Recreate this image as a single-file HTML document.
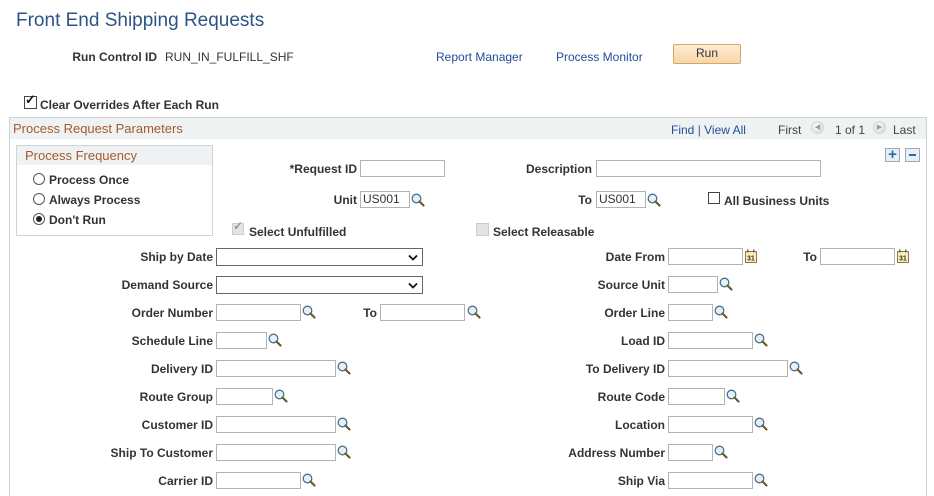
<!DOCTYPE html>
<html><head><meta charset="utf-8"><style>
html,body{margin:0;width:934px;height:496px;overflow:hidden}
body{background:#fff;font-family:"Liberation Sans",Arial,sans-serif;position:relative}
div,span{position:absolute}
.t{font-size:12px;color:#333;white-space:nowrap;line-height:14px}
.b{font-weight:bold}
.l{font-size:12px;color:#333;font-weight:bold;white-space:nowrap;line-height:14px;text-align:right}
.lk{font-size:12px;color:#1f4e99;white-space:nowrap;line-height:14px}
.i{border:1px solid #b3b3b3;background:#fff;height:17px;box-sizing:border-box;font-size:12px;color:#333;line-height:15px;padding-left:2px}
.s{border:1px solid #666;background:#fff;height:18px;box-sizing:border-box}
.m{width:14px;height:14px}
.cb{width:12px;height:12px;border:1px solid #444;background:#fff;box-sizing:border-box}
.rd{width:12px;height:12px;border:1px solid #555;border-radius:50%;background:#fff;box-sizing:border-box}
.cal{width:12px;height:14px}
</style></head><body>
<svg width="0" height="0" style="position:absolute"><defs>
<symbol id="mg" viewBox="0 0 14 14"><circle cx="5.5" cy="5.5" r="4.3" fill="#e4f1fb" stroke="#4a6f8a" stroke-width="1.3"/><path d="M8.5 8.5L12.5 12.5" stroke="#6b5a2a" stroke-width="2.2" stroke-linecap="round"/></symbol>
<symbol id="cl" viewBox="0 0 12 14"><rect x="0.5" y="2.5" width="11" height="11" fill="#fbeebb" stroke="#8a7a40"/><rect x="2" y="0.5" width="1.5" height="3" fill="#666"/><rect x="8" y="0.5" width="1.5" height="3" fill="#666"/><text x="2" y="11.5" font-size="7" font-family="Liberation Sans" font-weight="bold" fill="#333">31</text></symbol>
<symbol id="dd" viewBox="0 0 10 7"><path d="M1 1.5L5 5.5L9 1.5" fill="none" stroke="#111" stroke-width="1.8"/></symbol>
</defs></svg>

<div style="left:16px;top:10px;font-size:19px;color:#2e5485;white-space:nowrap">Front End Shipping Requests</div>
<div class="l" style="right:777px;top:50px">Run Control ID</div>
<div class="t" style="left:165px;top:50px">RUN_IN_FULFILL_SHF</div>
<div class="lk" style="left:436px;top:50px">Report Manager</div>
<div class="lk" style="left:556px;top:50px">Process Monitor</div>
<div style="left:673px;top:44px;width:68px;height:20px;box-sizing:border-box;border:1px solid #d8a66d;border-radius:2px;background:linear-gradient(#fdebd2,#f8d7a8);font-size:12px;color:#333;text-align:center;line-height:17px">Run</div>

<div class="cb" style="left:24px;top:96px;width:13px;height:13px"></div>
<div style="left:25px;top:92px;font-size:13px;font-weight:bold;color:#111">✓</div>
<div class="t b" style="left:40px;top:98px">Clear Overrides After Each Run</div>

<div style="left:9px;top:117px;width:918px;height:390px;border:1px solid #cfd3d5;box-sizing:border-box"></div>
<div style="left:10px;top:118px;width:916px;height:21px;background:#eff2f2"></div>
<div style="left:13px;top:121px;font-size:13px;color:#a65a2c;white-space:nowrap">Process Request Parameters</div>
<div class="lk" style="left:671px;top:123px">Find <span style="position:static;color:#555">|</span> View All</div>
<div class="t" style="left:778px;top:123px;color:#444">First</div>
<div style="left:811px;top:121px;width:13px;height:13px;border-radius:50%;background:radial-gradient(circle at 40% 40%,#fff,#cfcfcf);border:1px solid #d5d5d5;box-sizing:border-box;font-size:7px;color:#999;text-align:center;line-height:11px">◀</div>
<div class="t" style="left:835px;top:123px;color:#444">1 of 1</div>
<div style="left:873px;top:121px;width:13px;height:13px;border-radius:50%;background:radial-gradient(circle at 40% 40%,#fff,#cfcfcf);border:1px solid #d5d5d5;box-sizing:border-box;font-size:7px;color:#999;text-align:center;line-height:11px">▶</div>
<div class="t" style="left:893px;top:123px;color:#444">Last</div>
<div style="left:885px;top:148px;width:15px;height:14px;border:1px solid #9ab;background:#e8eef2;box-sizing:border-box;color:#2a6ab0;font-weight:bold;font-size:15px;line-height:11px;text-align:center">+</div>
<div style="left:905px;top:148px;width:15px;height:14px;border:1px solid #9ab;background:#e8eef2;box-sizing:border-box"><span style="left:3px;top:5px;width:7px;height:2px;background:#2a6ab0"></span></div>

<div style="left:16px;top:145px;width:197px;height:91px;border:1px solid #cfd3d5;box-sizing:border-box"></div>
<div style="left:17px;top:146px;width:195px;height:19px;background:#eff2f2"></div>
<div style="left:25px;top:148px;font-size:13px;color:#a65a2c;white-space:nowrap">Process Frequency</div>
<div class="rd" style="left:33px;top:173px"></div><div class="t b" style="left:49px;top:173px">Process Once</div>
<div class="rd" style="left:33px;top:193px"></div><div class="t b" style="left:49px;top:193px">Always Process</div>
<div class="rd" style="left:33px;top:213px"><span style="left:2px;top:2px;width:6px;height:6px;border-radius:50%;background:#222"></span></div><div class="t b" style="left:49px;top:213px">Don't Run</div>

<div class="l" style="right:577px;top:162px">*Request ID</div>
<div class="i" style="left:360px;top:160px;width:85px"></div>
<div class="l" style="right:342px;top:162px">Description</div>
<div class="i" style="left:596px;top:160px;width:225px"></div>

<div class="l" style="right:577px;top:193px">Unit</div>
<div class="i" style="left:360px;top:191px;width:50px">US001</div>
<svg class="m" style="position:absolute;left:411px;top:193px"><use href="#mg"/></svg>
<div class="l" style="right:342px;top:193px">To</div>
<div class="i" style="left:596px;top:191px;width:50px">US001</div>
<svg class="m" style="position:absolute;left:647px;top:193px"><use href="#mg"/></svg>
<div class="cb" style="left:708px;top:192px"></div>
<div class="t b" style="left:724px;top:194px">All Business Units</div>

<div style="left:232px;top:223px;width:12px;height:12px;border:1px solid #ccc;background:#e4e4e4;box-sizing:border-box"></div>
<div style="left:233px;top:219px;font-size:12px;font-weight:bold;color:#999">✓</div>
<div class="t b" style="left:249px;top:225px">Select Unfulfilled</div>
<div style="left:476px;top:223px;width:13px;height:13px;border:1px solid #ccc;background:#e4e4e4;box-sizing:border-box"></div>
<div class="t b" style="left:493px;top:225px">Select Releasable</div>

<div class="l" style="right:721px;top:250px">Ship by Date</div>
<div class="s" style="left:216px;top:248px;width:207px"><svg style="position:absolute;right:4px;top:5px" width="10" height="7"><use href="#dd"/></svg></div>
<div class="l" style="right:721px;top:278px">Demand Source</div>
<div class="s" style="left:216px;top:276px;width:207px"><svg style="position:absolute;right:4px;top:5px" width="10" height="7"><use href="#dd"/></svg></div>

<div class="l" style="right:721px;top:306px">Order Number</div>
<div class="i" style="left:216px;top:304px;width:85px"></div>
<svg class="m" style="position:absolute;left:302px;top:305px"><use href="#mg"/></svg>
<div class="l" style="right:557px;top:306px">To</div>
<div class="i" style="left:380px;top:304px;width:85px"></div>
<svg class="m" style="position:absolute;left:467px;top:305px"><use href="#mg"/></svg>

<div class="l" style="right:721px;top:334px">Schedule Line</div>
<div class="i" style="left:216px;top:332px;width:51px"></div>
<svg class="m" style="position:absolute;left:268px;top:333px"><use href="#mg"/></svg>

<div class="l" style="right:721px;top:362px">Delivery ID</div>
<div class="i" style="left:216px;top:360px;width:120px"></div>
<svg class="m" style="position:absolute;left:337px;top:361px"><use href="#mg"/></svg>

<div class="l" style="right:721px;top:390px">Route Group</div>
<div class="i" style="left:216px;top:388px;width:57px"></div>
<svg class="m" style="position:absolute;left:274px;top:389px"><use href="#mg"/></svg>

<div class="l" style="right:721px;top:418px">Customer ID</div>
<div class="i" style="left:216px;top:416px;width:120px"></div>
<svg class="m" style="position:absolute;left:337px;top:417px"><use href="#mg"/></svg>

<div class="l" style="right:721px;top:446px">Ship To Customer</div>
<div class="i" style="left:216px;top:444px;width:120px"></div>
<svg class="m" style="position:absolute;left:337px;top:445px"><use href="#mg"/></svg>

<div class="l" style="right:721px;top:474px">Carrier ID</div>
<div class="i" style="left:216px;top:472px;width:85px"></div>
<svg class="m" style="position:absolute;left:302px;top:473px"><use href="#mg"/></svg>

<div class="l" style="right:269px;top:250px">Date From</div>
<div class="i" style="left:668px;top:248px;width:75px"></div>
<svg class="cal" style="position:absolute;left:745px;top:249px"><use href="#cl"/></svg>
<div class="l" style="right:117px;top:250px">To</div>
<div class="i" style="left:820px;top:248px;width:75px"></div>
<svg class="cal" style="position:absolute;left:897px;top:249px"><use href="#cl"/></svg>

<div class="l" style="right:269px;top:278px">Source Unit</div>
<div class="i" style="left:668px;top:276px;width:50px"></div>
<svg class="m" style="position:absolute;left:719px;top:277px"><use href="#mg"/></svg>

<div class="l" style="right:269px;top:306px">Order Line</div>
<div class="i" style="left:668px;top:304px;width:45px"></div>
<svg class="m" style="position:absolute;left:714px;top:305px"><use href="#mg"/></svg>

<div class="l" style="right:269px;top:334px">Load ID</div>
<div class="i" style="left:668px;top:332px;width:85px"></div>
<svg class="m" style="position:absolute;left:754px;top:333px"><use href="#mg"/></svg>

<div class="l" style="right:269px;top:362px">To Delivery ID</div>
<div class="i" style="left:668px;top:360px;width:120px"></div>
<svg class="m" style="position:absolute;left:789px;top:361px"><use href="#mg"/></svg>

<div class="l" style="right:269px;top:390px">Route Code</div>
<div class="i" style="left:668px;top:388px;width:57px"></div>
<svg class="m" style="position:absolute;left:726px;top:389px"><use href="#mg"/></svg>

<div class="l" style="right:269px;top:418px">Location</div>
<div class="i" style="left:668px;top:416px;width:85px"></div>
<svg class="m" style="position:absolute;left:754px;top:417px"><use href="#mg"/></svg>

<div class="l" style="right:269px;top:446px">Address Number</div>
<div class="i" style="left:668px;top:444px;width:45px"></div>
<svg class="m" style="position:absolute;left:714px;top:445px"><use href="#mg"/></svg>

<div class="l" style="right:269px;top:474px">Ship Via</div>
<div class="i" style="left:668px;top:472px;width:85px"></div>
<svg class="m" style="position:absolute;left:754px;top:473px"><use href="#mg"/></svg>
</body></html>
